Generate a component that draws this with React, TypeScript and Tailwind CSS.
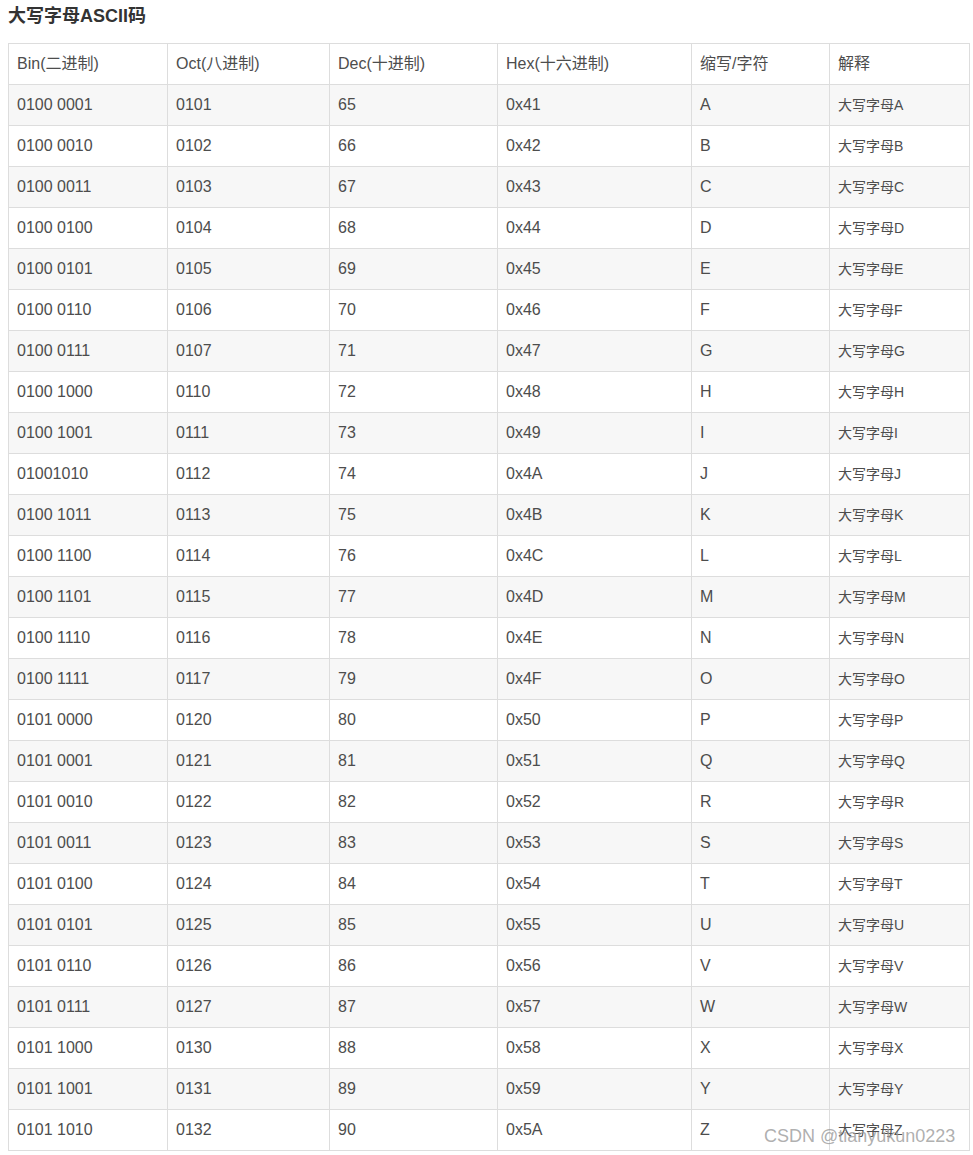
const rows: [string, string, string, string, string][] = [
  ["0100 0001", "0101", "65", "0x41", "A"],
  ["0100 0010", "0102", "66", "0x42", "B"],
  ["0100 0011", "0103", "67", "0x43", "C"],
  ["0100 0100", "0104", "68", "0x44", "D"],
  ["0100 0101", "0105", "69", "0x45", "E"],
  ["0100 0110", "0106", "70", "0x46", "F"],
  ["0100 0111", "0107", "71", "0x47", "G"],
  ["0100 1000", "0110", "72", "0x48", "H"],
  ["0100 1001", "0111", "73", "0x49", "I"],
  ["01001010", "0112", "74", "0x4A", "J"],
  ["0100 1011", "0113", "75", "0x4B", "K"],
  ["0100 1100", "0114", "76", "0x4C", "L"],
  ["0100 1101", "0115", "77", "0x4D", "M"],
  ["0100 1110", "0116", "78", "0x4E", "N"],
  ["0100 1111", "0117", "79", "0x4F", "O"],
  ["0101 0000", "0120", "80", "0x50", "P"],
  ["0101 0001", "0121", "81", "0x51", "Q"],
  ["0101 0010", "0122", "82", "0x52", "R"],
  ["0101 0011", "0123", "83", "0x53", "S"],
  ["0101 0100", "0124", "84", "0x54", "T"],
  ["0101 0101", "0125", "85", "0x55", "U"],
  ["0101 0110", "0126", "86", "0x56", "V"],
  ["0101 0111", "0127", "87", "0x57", "W"],
  ["0101 1000", "0130", "88", "0x58", "X"],
  ["0101 1001", "0131", "89", "0x59", "Y"],
  ["0101 1010", "0132", "90", "0x5A", "Z"],
];

const headers = ["Bin(二进制)", "Oct(八进制)", "Dec(十进制)", "Hex(十六进制)", "缩写/字符", "解释"];
const widths = ["w-[159px]", "w-[162px]", "w-[168px]", "w-[194px]", "w-[138px]", "w-[140px]"];

const cell = "border border-[#dddddd] h-[41px] px-2 text-left align-middle font-normal";

export default function App() {
  return (
    <div className="relative bg-white min-h-[1155px] font-['Liberation_Sans','Noto_Sans_CJK_SC',sans-serif] text-[#4d4d4d]">
      <h3 className="px-2 pt-[4px] h-[43px] text-[18px] font-bold text-[#333333] leading-[24px]">
        大写字母ASCII码
      </h3>

      <table className="ml-2 table-fixed border-collapse w-[961px] text-[16px]">
        <colgroup>
          {widths.map((w, i) => (
            <col key={i} className={w} />
          ))}
        </colgroup>
        <thead>
          <tr>
            {headers.map((h) => (
              <th key={h} className={cell}>
                {h}
              </th>
            ))}
          </tr>
        </thead>
        <tbody>
          {rows.map((r, i) => (
            <tr key={r[4]} className={i % 2 === 0 ? "bg-[#f7f7f7]" : "bg-white"}>
              {r.map((v, j) => (
                <td key={j} className={cell}>
                  {v}
                </td>
              ))}
              <td className={cell + " text-[14px]"}>
                大写字母{r[4]}
              </td>
            </tr>
          ))}
        </tbody>
      </table>

      {/* watermark */}
      <div className="absolute left-[764px] top-[1123px] text-[18px] text-[#9a9a9a]/80 font-['Liberation_Sans',sans-serif] whitespace-nowrap">
        CSDN @tianyukun0223
      </div>
    </div>
  );
}
